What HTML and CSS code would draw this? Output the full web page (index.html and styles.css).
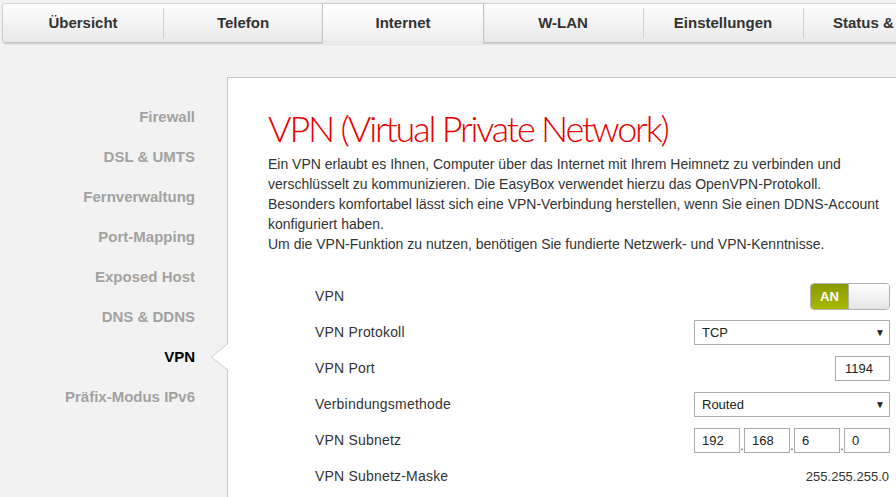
FILE: index.html
```html
<!DOCTYPE html>
<html lang="de">
<head>
<meta charset="utf-8">
<title>VPN</title>
<link rel="stylesheet" href="styles.css">
</head>
<body>
<nav class="topnav">
  <a class="tab">Übersicht</a>
  <a class="tab">Telefon</a>
  <a class="tab active">Internet</a>
  <a class="tab">W-LAN</a>
  <a class="tab">Einstellungen</a>
  <a class="tab last">Status &amp;</a>
</nav>
<div class="layout">
  <aside class="sidebar">
    <a class="side-item">Firewall</a>
    <a class="side-item">DSL &amp; UMTS</a>
    <a class="side-item">Fernverwaltung</a>
    <a class="side-item">Port-Mapping</a>
    <a class="side-item">Exposed Host</a>
    <a class="side-item">DNS &amp; DDNS</a>
    <a class="side-item current">VPN<span class="pointer"></span></a>
    <a class="side-item">Präfix-Modus IPv6</a>
  </aside>
  <main class="panel">
    <h1 class="title">VPN (Virtual Private Network)</h1>
    <p class="intro">Ein VPN erlaubt es Ihnen, Computer über das Internet mit Ihrem Heimnetz zu verbinden und verschlüsselt zu kommunizieren. Die EasyBox verwendet hierzu das OpenVPN-Protokoll.<br>Besonders komfortabel lässt sich eine VPN-Verbindung herstellen, wenn Sie einen DDNS-Account konfiguriert haben.<br>Um die VPN-Funktion zu nutzen, benötigen Sie fundierte Netzwerk- und VPN-Kenntnisse.</p>
    <div class="form">
      <div class="row">
        <span class="label">VPN</span>
        <div class="toggle"><span class="on">AN</span><span class="knob"></span></div>
      </div>
      <div class="row">
        <span class="label">VPN Protokoll</span>
        <div class="select"><span>TCP</span><span class="caret">▼</span></div>
      </div>
      <div class="row">
        <span class="label">VPN Port</span>
        <div class="input port">1194</div>
      </div>
      <div class="row">
        <span class="label">Verbindungsmethode</span>
        <div class="select"><span>Routed</span><span class="caret">▼</span></div>
      </div>
      <div class="row">
        <span class="label">VPN Subnetz</span>
        <div class="ip">
          <div class="input oct">192</div><span class="dot">.</span>
          <div class="input oct">168</div><span class="dot">.</span>
          <div class="input oct">6</div><span class="dot">.</span>
          <div class="input oct">0</div>
        </div>
      </div>
      <div class="row">
        <span class="label">VPN Subnetz-Maske</span>
        <span class="value">255.255.255.0</span>
      </div>
    </div>
  </main>
</div>
</body>
</html>
```
FILE: styles.css
```css
html, body {
  margin: 0;
  padding: 0;
  height: 100%;
  overflow: hidden;
}
body {
  background: #f2f2f2;
  font-family: "Liberation Sans", Arial, sans-serif;
  color: #333;
}
.topnav {
  display: flex;
  margin: 3px 0 0 3px;
  height: 39px;
  width: 1100px;
  border-top: 1px solid #d4d4d4;
  border-radius: 3px 0 0 3px;
  background: linear-gradient(#fdfdfd, #e9e9e9);
  box-shadow: 0 2px 2px rgba(0,0,0,0.18), -1px 0 1px rgba(0,0,0,0.12);
  box-sizing: border-box;
}
.tab {
  flex: 0 0 160px;
  display: flex;
  align-items: center;
  justify-content: center;
  font-weight: bold;
  font-size: 15px;
  color: #333;
  position: relative;
  padding-bottom: 1px;
}
.tab.last {
  justify-content: flex-start;
  padding-left: 30px;
  box-sizing: border-box;
}
.tab + .tab::before {
  content: "";
  position: absolute;
  left: 0;
  top: 4px;
  bottom: 4px;
  width: 1px;
  background: #d0d0d0;
}
.tab.active {
  background: linear-gradient(#ffffff, #eeeeee);
  box-shadow: -1px 0 1px #c4c4c4, 1px 0 1px #c4c4c4, 0 2px 0 #f2f2f2;
  z-index: 1;
}
.tab.active::before, .tab.active + .tab::before { display: none; }
.layout {
  display: flex;
  margin-top: 35px;
  height: 420px;
}
.sidebar {
  flex: 0 0 227px;
  display: flex;
  flex-direction: column;
  align-items: flex-end;
  padding-top: 20px;
  box-sizing: border-box;
}
.side-item {
  display: block;
  height: 40px;
  line-height: 40px;
  padding-right: 32px;
  font-size: 15px;
  font-weight: bold;
  color: #a2a2a2;
  position: relative;
  width: 100%;
  text-align: right;
  box-sizing: border-box;
}
.side-item.current { color: #000; }
.pointer {
  position: absolute;
  right: -1px;
  top: 6px;
  width: 0;
  height: 0;
  border-top: 14px solid transparent;
  border-bottom: 14px solid transparent;
  border-right: 17px solid #c8c8c8;
  z-index: 2;
}
.pointer::after {
  content: "";
  position: absolute;
  left: 1px;
  top: -13px;
  border-top: 13px solid transparent;
  border-bottom: 13px solid transparent;
  border-right: 16px solid #fff;
}
.panel {
  flex: 1;
  background: #fff;
  border-left: 1px solid #c8c8c8;
  border-top: 1px solid #c8c8c8;
  padding: 0 6px 0 40px;
}
.title {
  margin: 30px 0 6px;
  font-family: Lato, "Liberation Sans", sans-serif;
  font-weight: 300;
  font-size: 36px;
  line-height: 40px;
  letter-spacing: -2.2px;
  color: #e60000;
}
.intro {
  margin: 0;
  font-size: 14px;
  line-height: 20px;
  color: #333;
}
.form {
  margin: 24px 0 0 47px;
}
.row {
  display: flex;
  align-items: center;
  justify-content: space-between;
  height: 36px;
  font-size: 14px;
}
.label { color: #333; letter-spacing: 0.2px; }
.toggle {
  display: flex;
  width: 80px;
  height: 27px;
  border: 1px solid #b0b0b0;
  border-radius: 4px;
  overflow: hidden;
  box-sizing: border-box;
}
.toggle .on {
  flex: 0 0 37px;
  background: linear-gradient(#8a9a00, #a8b800);
  color: #fff;
  font-weight: bold;
  font-size: 13px;
  display: flex;
  align-items: center;
  justify-content: center;
}
.toggle .knob {
  flex: 1;
  background: linear-gradient(#ffffff, #e4e4e4);
  border-left: 1px solid #b0b0b0;
}
.select {
  width: 196px;
  height: 25px;
  border: 1px solid #a9a9a9;
  box-sizing: border-box;
  display: flex;
  align-items: center;
  justify-content: space-between;
  padding: 0 4px 0 7px;
  background: #fff;
  color: #222;
  font-size: 13px;
}
.caret { font-size: 10px; color: #222; }
.input {
  height: 25px;
  border: 1px solid #a9a9a9;
  box-sizing: border-box;
  display: flex;
  align-items: center;
  background: #fff;
  color: #222;
  padding-left: 7px;
  font-size: 13px;
}
.port { width: 55px; padding-left: 9px; }
.ip { display: flex; align-items: flex-end; }
.oct { width: 46px; }
.dot { width: 4px; text-align: center; font-size: 12px; line-height: 14px; }
.value { color: #333; font-size: 13px; padding-right: 1px; }
```
